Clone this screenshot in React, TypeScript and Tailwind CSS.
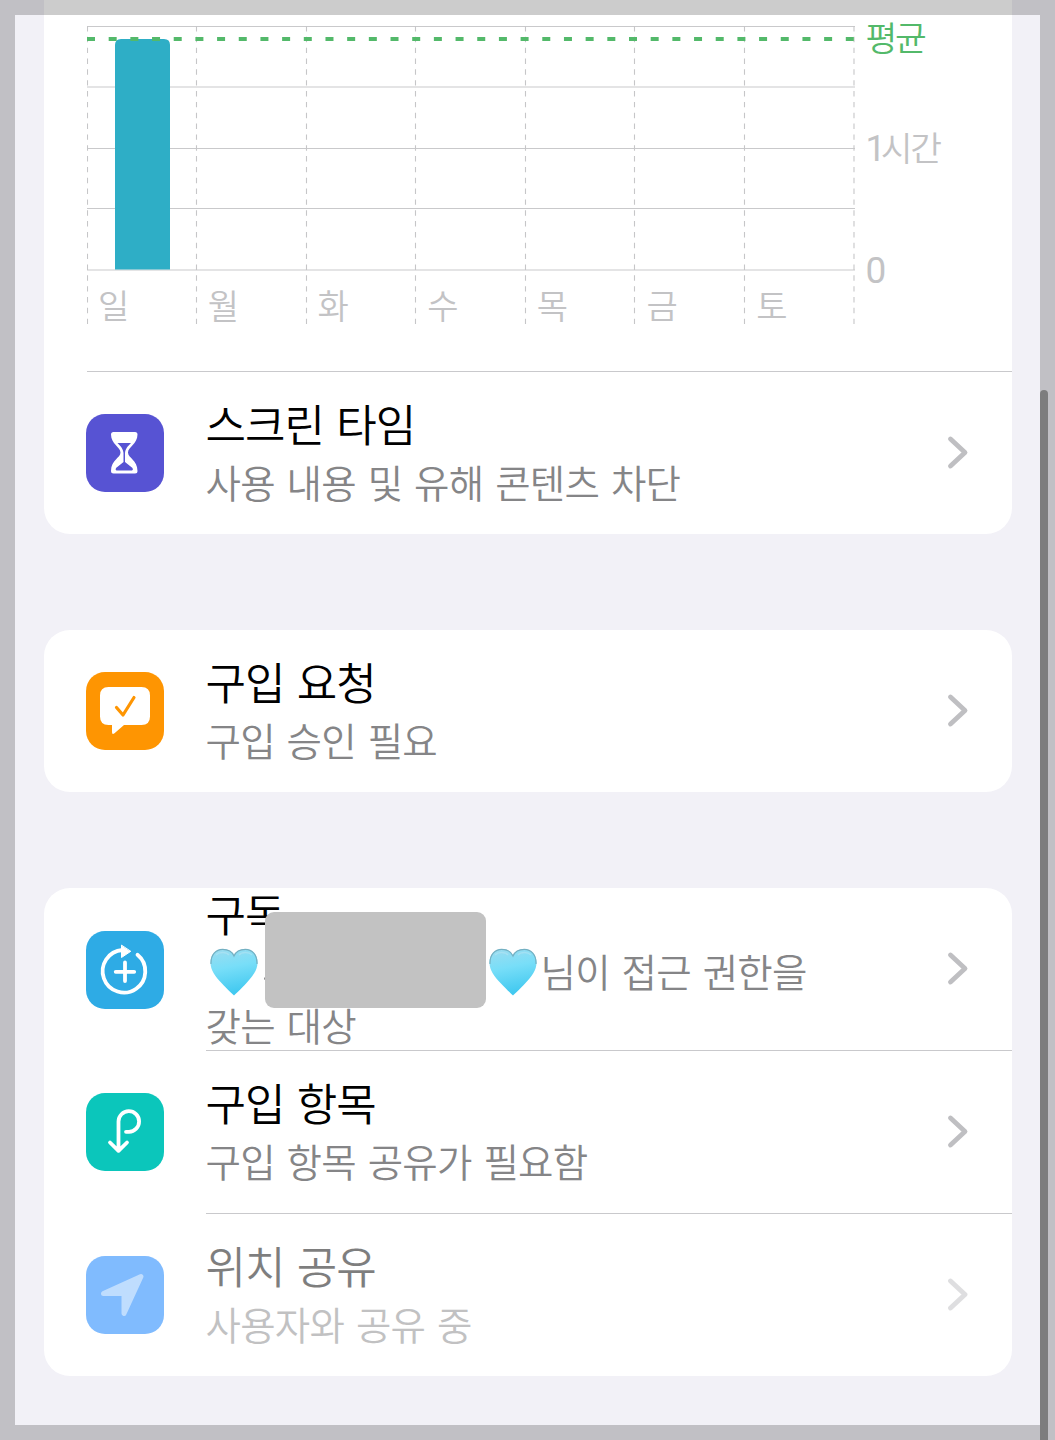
import type { ReactNode } from "react";

const days = ["일", "월", "화", "수", "목", "금", "토"];
const columns = [0.5, 109.5, 219.5, 328.5, 438.5, 547.5, 657.5, 767];
const gridLines = [26.5, 87, 148.5, 208.5, 270];

function UsageChart() {
  return (
    <div className="flex h-[371px] pl-[43px]">
      <div className="relative w-[768px] shrink-0">
        <svg className="block h-[330px] w-[768px]" viewBox="0 0 768 330" fill="none">
          {gridLines.map((y) => (
            <path key={y} d={`M0 ${y}H768`} stroke="#c9c9cb" strokeWidth="1.1" />
          ))}
          {columns.map((x) => (
            <path key={x} d={`M${x} 26V324`} stroke="#c6c6c8" strokeWidth="1.1" strokeDasharray="5.42 5.42" />
          ))}
          <path d="M28 269.500V45Q28 39 34 39H77Q83 39 83 45V269.500Z" fill="#2eaec6" />
          <path d="M0 39H767" stroke="#53b96a" strokeWidth="3.8" strokeDasharray="8 13.68" />
        </svg>
        <div className="absolute inset-x-0 top-[283px] grid grid-cols-7 text-[34px] leading-[44px] text-[#c3c3c5]">
          {days.map((d) => (
            <span key={d} className="pl-[11.500px]">{d}</span>
          ))}
        </div>
      </div>
      <div className="flex flex-col pl-[11px] pt-[12px] text-[34.500px] leading-[48px] tracking-[-2.200px] text-[#c3c3c5]">
        <span className="text-[#53b96a]">평균</span>
        <span className="mt-[62px] flex whitespace-nowrap">
          <span className="mt-[3px] font-['Roboto'] text-[36px] font-normal tracking-[-5px]">1</span>
          <span>시간</span>
        </span>
        <span className="mt-[74px] font-['Roboto'] text-[37px] font-normal">0</span>
      </div>
    </div>
  );
}

function Tile({ color, children }: { color: string; children: ReactNode }) {
  return (
    <div className={`size-[78px] shrink-0 overflow-hidden rounded-[19px] ${color}`}>
      <svg className="block size-full" viewBox="0 0 78 78" fill="none" strokeLinecap="round" strokeLinejoin="round">
        {children}
      </svg>
    </div>
  );
}

function Heart() {
  return (
    <svg className="mx-[4px] h-[48px] w-[48px] shrink-0" viewBox="0 0 48 48">
      <defs>
        <linearGradient id="heartFill" x1="0" y1="0" x2="0.2" y2="1">
          <stop offset="0" stopColor="#9edcef" />
          <stop offset="0.45" stopColor="#78def8" />
          <stop offset="1" stopColor="#42c9f0" />
        </linearGradient>
      </defs>
      <path
        d="M24 47.500C22.500 46 17 41 11.500 35C5 28 .5 22 .5 14.500C.5 6.500 6 1 12.700 1C18.500 1 22.500 4 24 7.500C25.500 4 29.500 1 35.300 1C42 1 47.500 6.500 47.500 14.500C47.500 22 43 28 36.500 35C31 41 25.500 46 24 47.500Z"
        fill="url(#heartFill)"
      />
      <path
        d="M1 16C.6 6.500 6 1.400 12.700 1.400C18.500 1.400 22.500 4.500 24 8C25.500 4.500 29.500 1.400 35.300 1.400C42 1.400 47.400 6.500 47 16"
        fill="none"
        stroke="#74b0c2"
        strokeWidth="1.200"
      />
      <path d="M6 7C9 3.800 16 3.500 19 7M29 7C32 3.500 39 3.800 42 7" fill="none" stroke="#b9e6f3" strokeWidth="1.600" opacity=".5" />
    </svg>
  );
}

function Chevron() {
  return (
    <svg className="mr-[42px] h-[36px] w-[24px] shrink-0" viewBox="0 0 24 36" fill="none">
      <path d="M4.500 4L19 17.500L4.500 31" stroke="#bfbfc2" strokeWidth="4.800" strokeLinecap="round" strokeLinejoin="round" />
    </svg>
  );
}

function Row({
  icon,
  title,
  subtitle,
  children,
  divider,
  faded,
}: {
  icon: ReactNode;
  title: string;
  subtitle?: string;
  children?: ReactNode;
  divider?: boolean;
  faded?: boolean;
}) {
  return (
    <div className="flex h-[162.500px] items-center pl-[42.500px]">
      {icon}
      <div className={`ml-[41.500px] flex h-full min-w-0 flex-1 items-center ${divider ? "border-b border-[#c9c9cc]" : ""}`}>
        <div className={`flex min-w-0 flex-1 items-center ${faded ? "opacity-50" : ""}`}>
          <div className="min-w-0 flex-1 whitespace-nowrap">
            <div className="-mt-[2px] text-[44px] leading-[54px] tracking-[-1px] [word-spacing:3.500px] text-black">{title}</div>
            {subtitle && (
              <div className="mt-[4px] text-[38.500px] leading-[54px] tracking-[-0.750px] [word-spacing:3.900px] text-[#858587]">{subtitle}</div>
            )}
            {children}
          </div>
          <Chevron />
        </div>
      </div>
    </div>
  );
}

export default function App() {
  return (
    <div className="relative h-[1440px] w-[1055px] overflow-hidden bg-[#f2f1f7] px-[43.500px] font-['Noto_Sans_CJK_KR',sans-serif] font-[350]">
      <section className="h-[533.500px] rounded-b-[26px] bg-white">
        <UsageChart />
        <div className="ml-[43px] h-px bg-[#c9c9cc]" />
        <Row
          title="스크린 타임"
          subtitle="사용 내용 및 유해 콘텐츠 차단"
          icon={
            <Tile color="bg-[#5753d3]">
              <path
                fill="white"
                fillRule="evenodd"
                d="M27.500 18H49Q51.500 18 51.500 20.500C51.500 30 42 33 42 38.500C42 44 51.500 46 51.500 57Q51.500 59.500 49 59.500H27.500Q25 59.500 25 57C25 46 34.500 44 34.500 38.500C34.500 33 25 30 25 20.500Q25 18 27.500 18ZM31.500 29H45C41 33 39.500 35 39 39V48L46.500 54Q47.500 56 46 56.500H30.500Q29 56 30 54L37.500 48V39C37 35 35.500 33 31.500 29Z"
              />
            </Tile>
          }
        />
      </section>

      <section className="mt-[96px] h-[162px] rounded-[26px] bg-white">
        <Row
          title="구입 요청"
          subtitle="구입 승인 필요"
          icon={
            <Tile color="bg-[#fe9502]">
              <path
                fill="white"
                d="M22.500 15H55.500Q64 15 64 23.500V44.500Q64 53 55.500 53H38L28.500 61.200Q26 63 26 60V53H22.500Q14 53 14 44.500V23.500Q14 15 22.500 15Z"
              />
              <path d="M30.500 35.500L37 43L48 25.500" stroke="#fe9502" strokeWidth="3.200" />
            </Tile>
          }
        />
      </section>

      <section className="mt-[96px] h-[488px] rounded-[26px] bg-white pt-[1.200px]">
        <Row
          divider
          title="구독"
          icon={
            <Tile color="bg-[#2eabe5]">
              <path d="M36.500 19A21.300 21.300 0 1 0 51.500 23.800" stroke="white" strokeWidth="3.800" />
              <path d="M35.500 14.500V26.500L44.500 20.500Z" fill="white" stroke="white" strokeWidth="1" />
              <path d="M39 31.500V50M29.700 40.800H48.200" stroke="white" strokeWidth="3.800" />
            </Tile>
          }
        >
          <div className="mt-[3px] text-[38.500px] leading-[54px] tracking-[-0.750px] [word-spacing:3.900px] text-[#858587]">
            <div className="relative flex h-[54px] items-center">
              <div className="mt-[5px]">
                <Heart />
              </div>
              <span className="ml-[2px] mt-[18px] h-[3px] w-[4px] rounded-full bg-[#858587]" />
              <div className="absolute left-[59.500px] top-[-31px] h-[96.500px] w-[221px] rounded-[9px] bg-[#c2c2c2]" />
              <div className="ml-[217px] flex items-center">
                <div className="mt-[5px]">
                  <Heart />
                </div>
                <span>님이 접근 권한을</span>
              </div>
            </div>
            <div>갖는 대상</div>
          </div>
        </Row>
        <Row
          divider
          title="구입 항목"
          subtitle="구입 항목 공유가 필요함"
          icon={
            <Tile color="bg-[#0bc6bb]">
              <path
                d="M32.500 57.500V28.500A10.300 10.300 0 1 1 43 38.800H40M24 49.500L32.500 57.800L41 49.500"
                stroke="white"
                strokeWidth="3.800"
              />
            </Tile>
          }
        />
        <Row
          faded
          title="위치 공유"
          subtitle="사용자와 공유 중"
          icon={
            <Tile color="bg-[#80bbfe]">
              <path d="M17.500 37.500L55 20.500L38 57.500V37.500Z" fill="#bfddfe" stroke="#bfddfe" strokeWidth="5" />
            </Tile>
          }
        />
      </section>

      <div className="pointer-events-none absolute inset-0 border-[15px] border-black/20" />
      <div className="absolute bottom-0 right-[7px] top-[390px] w-[8px] rounded-t-[4px] bg-[#7d7d7e]" />
    </div>
  );
}
